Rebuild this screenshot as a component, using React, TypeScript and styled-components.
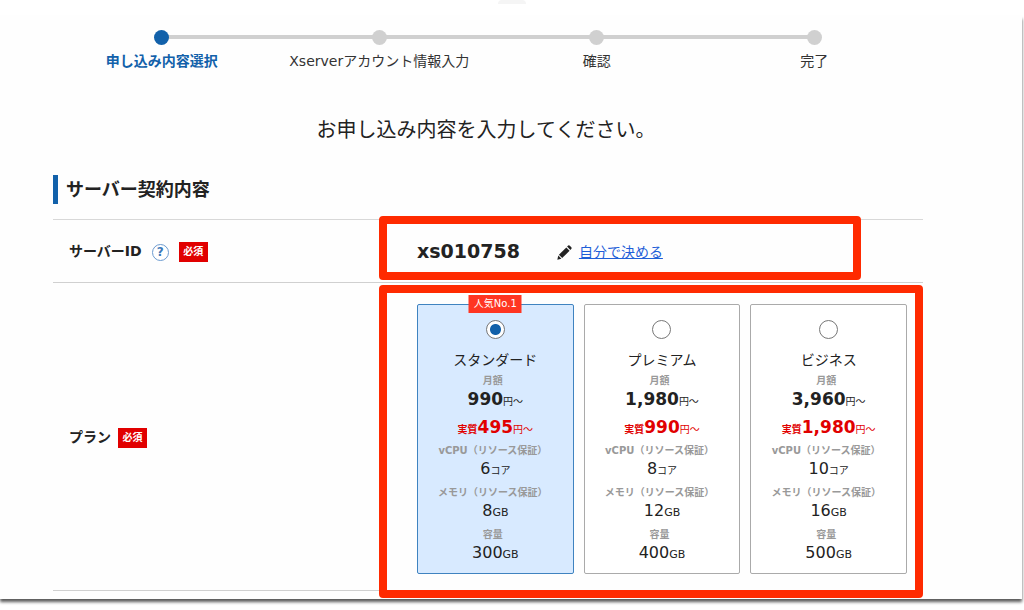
import React, { useState } from "react";
import styled, { createGlobalStyle, css } from "styled-components";

const BLUE = "#1261aa";
const RED = "#e10000";

const GlobalStyle = createGlobalStyle`
  *, *::before, *::after { box-sizing: border-box; }
  body {
    margin: 0;
    background: #fff;
    color: #222;
    font-family: "DejaVu Sans", "Noto Sans CJK JP", sans-serif;
    font-size: 14px;
    line-height: 20px;
  }
`;

const Page = styled.div`
  min-height: 100vh;
  padding-bottom: 10px;
`;

const TopTab = styled.div`
  width: 28px;
  height: 4px;
  margin: 0 auto;
  border-radius: 4px 4px 0 0;
  background: #f5f5f5;
`;

const Sheet = styled.main`
  margin: 12px 2px 0 0;
  padding: 14px 99px 8px 53px;
  background: #fefefe;
  box-shadow: 0 3px 3px rgba(0, 0, 0, 0.65);
`;

const Steps = styled.ol`
  display: grid;
  grid-template-columns: repeat(4, 1fr);
  margin: 0;
  padding: 0;
  list-style: none;
`;

const Step = styled.li<{ $active?: boolean }>`
  position: relative;
  display: flex;
  flex-direction: column;
  align-items: center;
  gap: 6px;
  color: ${(p) => (p.$active ? BLUE : "#333")};
  font-weight: ${(p) => (p.$active ? 700 : 400)};
  white-space: nowrap;

  &:not(:last-child)::after {
    content: "";
    position: absolute;
    top: 5px;
    left: 50%;
    width: 100%;
    height: 4px;
    background: #d0d0d0;
  }
`;

const StepDot = styled.span<{ $active?: boolean }>`
  position: relative;
  z-index: 1;
  width: 15px;
  height: 15px;
  border-radius: 50%;
  background: ${(p) => (p.$active ? BLUE : "#d0d0d0")};
`;

const Lead = styled.p`
  margin: 44px 0 30px;
  padding-right: 4px;
  font-size: 20px;
  line-height: 30px;
  text-align: center;
`;

const SectionTitle = styled.h2`
  margin: 0 0 15px;
  padding-left: 8px;
  border-left: 5px solid ${BLUE};
  font-size: 18px;
  line-height: 29px;
`;

const Rows = styled.div`
  border-top: 1px solid #d8d8d8;
`;

const Row = styled.div`
  display: grid;
  grid-template-columns: 326px 1fr;
  border-bottom: 1px solid #d0d0d0;
`;

const RowHead = styled.div`
  display: flex;
  align-items: center;
  padding-left: 16px;
  font-weight: 700;
`;

const HelpButton = styled.button`
  width: 17px;
  height: 17px;
  margin: 2px 10px 0;
  padding: 0;
  border: 1px solid #6c9bd0;
  border-radius: 50%;
  background: #fff;
  color: #3b78b9;
  font: bold 12px/15px "DejaVu Sans", sans-serif;
`;

const Required = styled.span`
  width: 29px;
  margin-top: 2px;
  background: ${RED};
  color: #fff;
  font-size: 10px;
  line-height: 20px;
  text-align: center;
`;

const PlanRequired = styled(Required)`
  margin-left: 7px;
`;

const highlight = css`
  content: "";
  position: absolute;
  border: 8px solid #ff2a00;
  border-radius: 4px;
  pointer-events: none;
`;

const IdCell = styled.div`
  position: relative;
  display: flex;
  align-items: center;
  padding: 16px 0 16px 38px;

  &::after {
    ${highlight}
    inset: -4px 62px 2px 0;
  }
`;

const ServerId = styled.strong`
  margin-right: 37px;
  font-size: 19px;
  line-height: 30px;
`;

const EditLink = styled.a`
  margin: 2px 0 0 7px;
  color: #1f5fd8;
  text-decoration: underline;
`;

const PencilSvg = styled.svg`
  width: 15px;
  height: 15px;
  margin-top: 2px;
  fill: #222;
`;

const PlanCell = styled.div`
  position: relative;
  display: grid;
  grid-template-columns: repeat(3, 1fr);
  gap: 10px;
  padding: 21px 16px 16px 38px;

  &::after {
    ${highlight}
    inset: 2px 0 -8px 0;
  }
`;

const PlanCard = styled.label<{ $selected: boolean }>`
  position: relative;
  display: flex;
  flex-direction: column;
  align-items: center;
  padding: 15px 0 3px;
  border: 1px solid ${(p) => (p.$selected ? "#3f83c0" : "#aaa")};
  border-radius: 2px;
  background: ${(p) => (p.$selected ? "#d8eaff" : "#fff")};
  white-space: nowrap;
  cursor: pointer;
`;

const PopularBadge = styled.span`
  position: absolute;
  top: -10px;
  left: 50%;
  width: 53px;
  transform: translateX(-50%);
  background: #ff3522;
  color: #fff;
  font-size: 10px;
  line-height: 18px;
  text-align: center;
`;

const Radio = styled.input`
  appearance: none;
  width: 19px;
  height: 19px;
  margin: 0 0 11px;
  border: 1px solid #777;
  border-radius: 50%;
  background: #fff;

  &:checked {
    background: radial-gradient(circle, ${BLUE} 5px, #fff 6px);
  }
`;

const PlanName = styled.span`
  margin-bottom: 4px;
`;

const Spec = styled.span`
  display: flex;
  flex-direction: column;
  align-items: center;
  margin-bottom: 6px;
`;

const SpecLabel = styled.span`
  padding-right: 5px;
  color: #999;
  font-size: 10px;
  font-weight: 700;
  line-height: 14px;
`;

const Amount = styled.span<{ $bold?: boolean; $sale?: boolean }>`
  height: 22px;
  color: ${(p) => (p.$sale ? RED : "inherit")};
  font-size: ${(p) => (p.$bold ? 17 : 16)}px;
  font-weight: ${(p) => (p.$bold ? 700 : 400)};
  line-height: 22px;

  small {
    line-height: 1;
  }
`;

const SalePrice = styled(Amount)`
  margin-bottom: 6px;
`;

const Unit = styled.small`
  font-size: 11px;
  font-weight: 400;
`;

const YenUnit = styled.small`
  font-size: 10px;
  font-weight: 400;
`;

const SalePrefix = styled.small`
  font-size: 10px;
`;

const steps = ["申し込み内容選択", "Xserverアカウント情報入力", "確認", "完了"];

const plans = [
  { id: "standard", name: "スタンダード", price: "990", sale: "495", cpu: "6", memory: "8", disk: "300", popular: true },
  { id: "premium", name: "プレミアム", price: "1,980", sale: "990", cpu: "8", memory: "12", disk: "400" },
  { id: "business", name: "ビジネス", price: "3,960", sale: "1,980", cpu: "10", memory: "16", disk: "500" },
];

function Pencil() {
  return (
    <PencilSvg viewBox="0 0 15 15" aria-hidden="true">
      <path d="M0.3 14.7 L1.3 10.6 L4.4 13.7 Z" />
      <path d="M1.9 9.8 L9.3 2.4 L12.6 5.7 L5.2 13.1 Z" />
      <path d="M10.1 1.6 L11.2 0.6 Q12 0 12.8 0.7 L14.3 2.2 Q15 3 14.4 3.8 L13.4 4.9 Z" />
    </PencilSvg>
  );
}

export default function App() {
  const [plan, setPlan] = useState("standard");
  return (
    <Page>
      <GlobalStyle />
      <TopTab />
      <Sheet>
        <Steps>
          {steps.map((label, i) => (
            <Step key={label} $active={i === 0}>
              <StepDot $active={i === 0} />
              {label}
            </Step>
          ))}
        </Steps>
        <Lead>お申し込み内容を入力してください。</Lead>
        <SectionTitle>サーバー契約内容</SectionTitle>
        <Rows>
          <Row>
            <RowHead>
              サーバーID
              <HelpButton type="button" aria-label="ヘルプ">?</HelpButton>
              <Required>必須</Required>
            </RowHead>
            <IdCell>
              <ServerId>xs010758</ServerId>
              <Pencil />
              <EditLink href="#server-id">自分で決める</EditLink>
            </IdCell>
          </Row>
          <Row role="radiogroup" aria-labelledby="plan-label">
            <RowHead>
              <span id="plan-label">プラン</span>
              <PlanRequired>必須</PlanRequired>
            </RowHead>
            <PlanCell>
              {plans.map((p) => (
                <PlanCard key={p.id} $selected={plan === p.id}>
                  {p.popular && <PopularBadge>人気No.1</PopularBadge>}
                  <Radio type="radio" name="plan" value={p.id} checked={plan === p.id} onChange={() => setPlan(p.id)} />
                  <PlanName>{p.name}</PlanName>
                  <Spec>
                    <SpecLabel>月額</SpecLabel>
                    <Amount $bold>{p.price}<YenUnit>円〜</YenUnit></Amount>
                  </Spec>
                  <SalePrice $bold $sale>
                    <SalePrefix>実質</SalePrefix>{p.sale}<YenUnit>円〜</YenUnit>
                  </SalePrice>
                  <Spec>
                    <SpecLabel>vCPU（リソース保証）</SpecLabel>
                    <Amount>{p.cpu}<YenUnit>コア</YenUnit></Amount>
                  </Spec>
                  <Spec>
                    <SpecLabel>メモリ（リソース保証）</SpecLabel>
                    <Amount>{p.memory}<Unit>GB</Unit></Amount>
                  </Spec>
                  <Spec>
                    <SpecLabel>容量</SpecLabel>
                    <Amount>{p.disk}<Unit>GB</Unit></Amount>
                  </Spec>
                </PlanCard>
              ))}
            </PlanCell>
          </Row>
        </Rows>
      </Sheet>
    </Page>
  );
}
